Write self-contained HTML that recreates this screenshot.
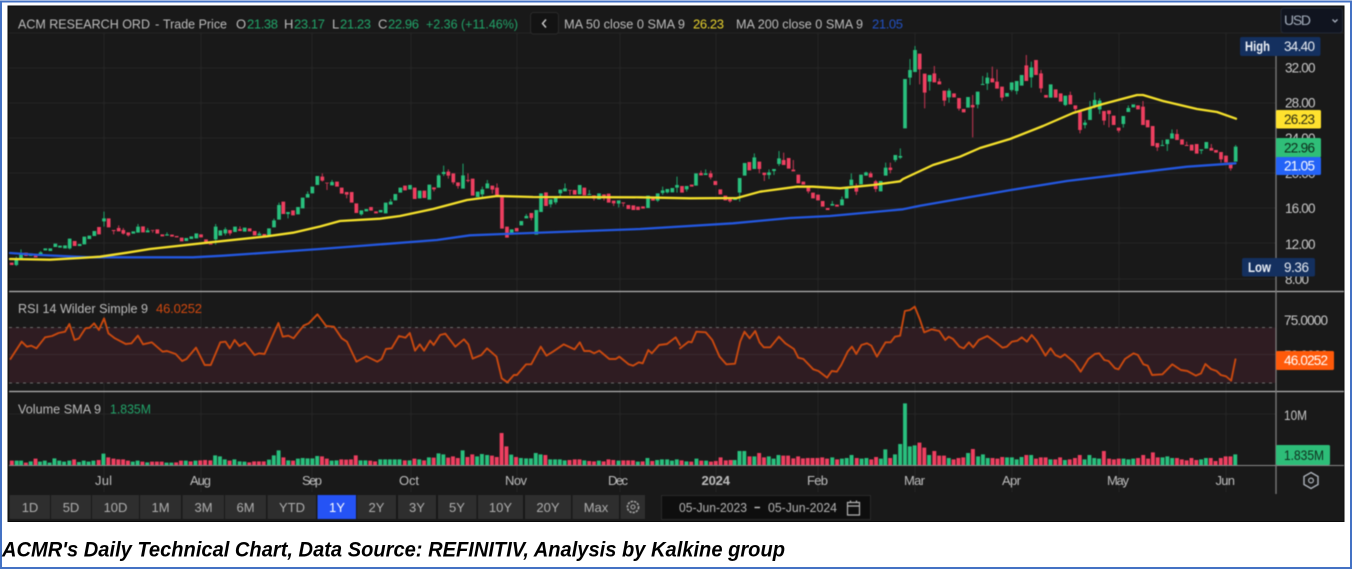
<!DOCTYPE html>
<html><head><meta charset="utf-8"><title>ACMR Daily Technical Chart</title>
<style>
html,body{margin:0;padding:0;background:#fff;width:1354px;height:570px;overflow:hidden}
svg{display:block}
text{font-family:"Liberation Sans",sans-serif;font-size:13px;fill:#bcbcbc}
.g{fill:#22a56a}.ax{fill:#c9c9c9;font-size:13.5px}.m{fill:#bdbdbd;font-size:13px}
.b{fill:#aeaeae;font-size:13px;text-anchor:middle}
.ln{fill:none;stroke-linejoin:round;stroke-linecap:round}
.bd,.wk,.vb{fill:none;vector-effect:non-scaling-stroke}
.bg{stroke:#29c07e}.br{stroke:#ee3f60}
.bd{stroke-width:3.7px}.wk{stroke-width:1.1px}.vb{stroke-width:3.9px}
.wg{stroke:#1f9a65}.wr{stroke:#b8344f}
.soft{filter:blur(.45px)}
</style></head><body>
<svg width="1354" height="570" viewBox="0 0 1354 570" xmlns="http://www.w3.org/2000/svg">
<rect width="1354" height="570" fill="#fff"/>
<rect x="1" y="1.5" width="1350" height="566.5" fill="none" stroke="#4472c4" stroke-width="2"/>
<rect x="8" y="6" width="1336" height="515.5" fill="#191919"/>
<rect x="8" y="6" width="1336" height="515.5" fill="none" stroke="#0a0a0a" stroke-width="1"/>
<g class="soft">
<!-- grid -->
<path d="M9 33H1344M9 68H1276M9 103H1276M9 138H1276M9 173H1276M9 208H1276M9 243H1276M9 279H1276M9 414H1276M104 33V492M201 33V492M312 33V492M411 33V492M517 33V492M620 33V492M716 33V492M818 33V492M915 33V492M1012 33V492M1119 33V492M1226 33V492" stroke="#262626" stroke-width="1" fill="none"/>
<!-- RSI band -->
<rect x="9" y="327.5" width="1267" height="55.5" fill="#2f1c22"/>
<path d="M9 354.5H1276" stroke="#3a2a2f"/>
<path d="M9 327.5H1276M9 383H1276" stroke="#6b6b6b" stroke-width="1" stroke-dasharray="3 4" fill="none"/>

<!-- candles 1 -->
<g transform="translate(0,150) scale(.33333)">
<path class="wk wg" d="M49 320V348M63 298V327M122 303V315M209 266V298M312 185V230M414 222V230M443 234V241M501 247V253M647 222V284M676 232V256M778 245V251M822 206V211M837 158V165M864 192V205M923 124V132"/>
<path class="wk wr" d="M341 243V253M356 226V234M370 234V254M385 256V260M458 242V248M690 250V256M720 229V237M793 259V262"/>
<path class="bd bg" d="M49 325V345M63 310V325M92 310V318M122 307V315M136 295V301M151 295V303M166 281V291M180 287V293M195 286V295M209 266V295M239 282V288M253 260V283M268 257V267M283 243V258M312 205V214M400 244V251M414 230V248M443 241V247M501 253V257M559 264V273M574 259V267M589 250V265M647 230V268M661 241V257M676 238V250M705 230V246M734 233V245M778 251V256M807 235V255M822 211V232M837 165V209M864 186V192M894 171V193M908 143V175M923 132V143M937 110V130M952 78V105"/>
<path class="bd br" d="M35 338V345M78 308V318M107 312V322M224 273V288M297 231V253M326 205V232M341 240V243M356 234V244M370 240V251M385 247V256M429 229V247M458 240V242M472 238V251M487 253V259M516 254V260M530 258V262M545 263V274M603 253V262M618 268V282M632 281V284M690 240V250M720 237V243M749 235V244M764 243V256M793 252V259M850 155V192M879 181V196"/>
</g>
<!-- candles 2 -->
<g transform="translate(320,150) scale(.33333)">
<path class="wk wg" d="M36 90V96M124 193V197M212 147V155M356 72V76M371 47V78M429 41V76M487 110V143M502 90V100M619 192V198M692 163V172M707 157V163M721 130V138M735 100V115M808 120V132M896 161V172"/>
<path class="wk wr" d="M7 70V95M21 100V120M80 134V145M342 118V124M385 58V86M400 97V103M414 108V116M444 70V97M517 119V131M531 100V113M634 204V211M750 122V135M822 146V152M852 145V152M881 160V168M910 160V170"/>
<path class="bd bg" d="M36 96V106M124 181V193M139 177V184M182 180V187M197 158V190M212 155V164M226 132V151M241 113V128M270 105V118M299 122V145M328 104V149M356 76V113M371 66V72M429 76V116M473 125V141M487 118V133M502 100V115M575 238V254M604 213V226M619 198V205M649 180V254M663 130V186M692 148V163M707 143V157M721 119V130M735 115V124M779 105V133M808 132V135M837 130V148M896 151V161"/>
<path class="bd br" d="M7 80V92M21 98V100M51 95V110M65 113V131M80 126V134M95 126V158M109 160V189M153 171V182M168 184V190M255 107V121M284 113V147M313 122V144M342 112V118M385 65V77M400 70V97M414 97V108M444 90V93M458 86V137M517 107V119M531 113V135M546 138V236M561 230V263M590 234V244M634 189V204M678 127V168M750 120V122M764 120V134M793 113V136M822 136V146M852 133V145M866 131V158M881 152V160M910 157V160M925 165V177M940 166V180M954 170V180"/>
</g>
<!-- candles 3 -->
<g transform="translate(640,140) scale(.33333)">
<path class="wk wg" d="M53 182V186M68 140V165M82 157V160M111 110V158M140 148V155M197 88V100M299 158V185M343 40V52M387 88V117M402 93V105M417 33V78M577 183V192M606 170V178M634 100V119M678 95V97M737 68V83M766 60V66M781 25V57"/>
<path class="wk wr" d="M183 92V99M212 92V118M270 184V188M358 87V100M373 105V123M431 38V60M460 60V89M505 154V160M649 130V165M692 95V100M707 120V156M751 68V100"/>
<path class="bd bg" d="M24 167V204M53 160V182M68 151V159M82 147V157M97 144V157M111 135V143M140 138V148M168 100V137M197 100V105M285 175V180M299 114V158M314 69V107M343 52V87M387 97V105M402 87V93M417 55V72M577 192V197M606 178V196M620 143V175M634 119V136M663 104V133M678 97V107M722 123V154M737 83V107M766 45V60M781 48V53"/>
<path class="bd br" d="M9 199V206M39 172V182M126 138V158M155 134V140M183 99V106M212 100V112M226 123V135M241 148V163M256 167V181M270 176V184M328 66V91M358 65V87M373 98V105M431 60V75M446 54V86M460 89V94M475 104V130M490 125V134M505 137V154M519 158V175M534 164V181M548 183V200M563 204V210M591 194V200M649 140V155M692 100V112M707 124V147M751 83V90"/>
</g>
<!-- candles 4 -->
<g transform="translate(890,40) scale(.33333)">
<path class="wk wg" d="M60 57V135M75 18V30M119 125V152M177 145V188M263 194V205M278 108V132M292 98V150M365 150V155M380 153V163M424 65V143M526 195V198M585 240V265M600 183V204M614 157V205M629 175V222M700 252V263M715 196V204M817 300V315M832 312V333M846 268V280M934 332V342M1037 315V320"/>
<path class="wk wr" d="M89 88V133M104 158V205M133 78V100M148 115V124M163 182V198M207 206V212M248 165V292M307 80V115M321 88V125M336 173V183M409 45V76M453 90V158M541 155V165M556 207V215M570 270V280M642 242V255M657 222V262M686 272V278M759 183V200M802 322V333M861 268V282M890 305V315M964 312V324M993 358V368M1022 385V392"/>
<path class="bd bg" d="M45 117V265M60 90V113M75 30V96M119 105V125M177 152V172M234 171V203M263 155V194M278 132V135M292 113V131M351 159V170M365 127V150M380 123V153M395 105V137M424 82V112M482 133V173M526 167V195M585 248V255M600 204V240M614 180V200M629 182V208M700 228V252M715 204V216M730 193V202M817 315V318M832 298V312M846 280V296M934 328V332M949 306V326M1037 320V365"/>
<path class="bd br" d="M89 41V88M104 101V158M133 100V127M148 124V133M163 152V182M192 160V172M207 174V206M221 207V217M248 195V202M307 115V127M321 125V146M336 140V173M409 76V123M438 60V105M453 100V145M468 165V173M497 148V173M512 160V185M541 165V193M556 196V207M570 215V270M642 213V242M657 211V222M671 227V255M686 263V272M744 196V208M759 200V255M773 240V262M788 258V318M802 309V322M861 282V300M876 298V314M890 315V318M905 314V332M920 312V341M964 324V332M978 330V338M993 336V358M1008 347V367M1022 367V385"/>
</g>

<!-- MA200 blue -->
<polyline class="ln" stroke="#2458e0" stroke-width="2.3" points="10,253 40,255 90,257.3 193,257.3 223,255.7 320,249 437,240 470,235.3 503,234 640,229 733,223.3 790,218 830,216 903,209.3 920,205.7 1011,190 1067,181 1136,172.7 1187,166.7 1235.5,163.3"/>
<!-- MA50 yellow -->
<polyline class="ln" stroke="#f4e02c" stroke-width="2.3" points="10,259 50,259.7 80,258 100,256.7 127,252.7 150,249 207,242.7 267,236.3 293,232.7 320,226.5 340,221 380,218.7 400,216 433,209 467,200 497,196 533,197 640,197.3 690,198.3 737,198 760,191.7 797,186.7 813,186.7 840,188.3 873,185 900,181.3 903,179 933,165 960,156.7 980,148 1010,139 1043,126 1073,113 1103,104 1137,95 1143,95 1163,101 1197,109 1217,112 1236,118.7"/>

<!-- RSI line -->
<g transform="translate(0,285) scale(.43365,.33333)">
<polyline class="ln" vector-effect="non-scaling-stroke" stroke="#c9490f" stroke-width="1.9" points="24,222 50,170 62,185 72,182 84,190 104,157 120,153 135,144 150,140 160,117 172,165 182,160 197,130 207,128 217,115 228,135 240,100 250,145 265,160 290,177 303,175 318,152 330,178 350,172 375,200 385,198 405,207 420,228 430,222 452,188 472,240 486,240 508,172 520,170 530,190 541,165 552,183 565,173 587,210 597,205 610,207 642,114 652,155 665,152 677,160 700,122 712,115 732,88 752,123 770,125 788,160 800,170 822,230 845,214 870,230 880,222 890,192 903,190 920,153 935,158 945,144 957,197 968,178 978,197 992,167 1000,180 1015,150 1027,146 1050,185 1070,163 1080,178 1090,221 1110,210 1123,190 1145,215 1157,280 1170,292 1185,270 1192,270 1213,238 1225,238 1247,185 1260,212 1275,200 1300,178 1325,193 1337,172 1347,198 1360,198 1370,205 1382,197 1405,222 1420,222 1428,215 1450,238 1460,242 1473,232 1482,235 1495,195 1503,205 1520,180 1538,177 1558,157 1568,180"/>
</g>
<g transform="translate(680,285) scale(.42992,.33333)">
<polyline class="ln" vector-effect="non-scaling-stroke" stroke="#c9490f" stroke-width="1.9" points="0,190 20,170 27,172 38,140 60,142 75,165 92,215 108,238 128,236 140,170 150,140 162,160 175,138 185,172 195,187 210,187 230,155 245,175 265,192 275,218 287,222 310,253 322,258 342,278 353,258 365,260 375,240 390,200 400,185 410,207 422,180 435,175 445,182 458,215 478,172 490,172 500,155 512,152 523,78 535,75 546,65 557,100 568,142 585,133 603,138 617,165 625,155 635,162 650,185 660,190 672,172 682,187 695,165 715,153 735,172 750,188 760,185 772,170 785,167 795,157 807,170 818,150 830,168 850,212 862,190 873,210 885,217 895,208 917,232 932,260 950,222 965,207 975,205 987,225 997,228 1012,250 1020,253 1035,222 1055,205 1065,210 1078,238 1088,242 1098,270 1122,268 1145,238 1165,255 1180,258 1200,272 1212,265 1222,237 1235,252 1248,258 1258,270 1270,274 1282,287 1292,223"/>
</g>

<!-- volume -->
<path d="M9 465.5H1344" stroke="#8a8a8a" stroke-width="1"/>
<g transform="translate(5,425) scale(.40177,.33333)">
<path class="vb bg" d="M29 120V107M40 120V107M64 120V109M87 120V110M99 120V107M111 120V113M123 120V100M135 120V107M147 120V110M160 120V107M184 120V111M196 120V107M208 120V110M220 120V107M245 120V86M318 120V110M330 120V107M354 120V112M402 120V113M414 120V113M450 120V107M474 120V107M523 120V91M535 120V94M547 120V103M571 120V103M584 120V109M596 120V110M657 120V104M669 120V91M681 120V76M705 120V106M729 120V101M741 120V99M753 120V100M765 120V100M777 120V93M813 120V107M825 120V106M885 120V106M897 120V106M934 120V103M946 120V103M958 120V103M970 120V103M982 120V103M1007 120V106M1031 120V103M1055 120V97M1079 120V85M1091 120V88M1139 120V76M1175 120V94M1187 120V87M1200 120V90M1260 120V89M1284 120V99M1297 120V100M1309 120V100M1321 120V84M1333 120V88M1357 120V103M1369 120V103M1381 120V103M1393 120V106M1442 120V106M1478 120V107M1527 120V107"/>
<path class="vb br" d="M17 120V107M52 120V113M76 120V101M172 120V103M233 120V105M257 120V97M270 120V101M282 120V103M294 120V103M306 120V107M342 120V110M366 120V110M378 120V110M390 120V110M426 120V112M438 120V107M462 120V109M486 120V106M498 120V105M511 120V106M559 120V107M608 120V112M620 120V109M632 120V109M644 120V109M693 120V97M717 120V107M789 120V94M801 120V101M837 120V103M849 120V104M861 120V103M873 120V91M909 120V107M921 120V109M995 120V106M1019 120V101M1043 120V106M1067 120V98M1103 120V98M1115 120V94M1127 120V99M1151 120V96M1163 120V88M1212 120V92M1224 120V96M1236 120V24M1248 120V64M1272 120V96M1345 120V90M1405 120V105M1418 120V103M1430 120V103M1454 120V108M1466 120V109M1490 120V109M1502 120V103M1514 120V105M1539 120V106M1551 120V106M1563 120V106"/>
</g>
<g transform="translate(635,400) scale(.40177,.33333)">
<path class="vb bg" d="M7 195V185M31 195V174M55 195V180M67 195V178M80 195V178M92 195V182M104 195V178M128 195V184M153 195V176M177 195V182M248 195V180M260 195V153M272 195V153M297 195V169M333 195V169M345 195V176M357 195V165M491 195V172M515 195V176M527 195V174M539 195V165M564 195V176M576 195V174M612 195V176M623 195V148M647 195V163M660 195V132M672 195V10M684 195V139M696 195V136M732 195V165M781 195V174M829 195V159M854 195V169M866 195V163M878 195V174M926 195V172M938 195V172M950 195V178M962 195V171M986 195V165M1034 195V178M1070 195V180M1119 195V178M1131 195V165M1143 195V174M1155 195V176M1216 195V176M1228 195V178M1240 195V176M1313 195V172M1325 195V169M1337 195V174M1409 195V178M1421 195V174M1494 195V163"/>
<path class="vb br" d="M19 195V184M43 195V183M116 195V181M140 195V185M165 195V182M189 195V185M201 195V183M213 195V172M226 195V181M238 195V180M285 195V169M309 195V159M321 195V172M369 195V167M381 195V167M394 195V175M406 195V169M418 195V175M430 195V174M442 195V174M454 195V174M466 195V172M478 195V176M503 195V178M552 195V174M588 195V178M600 195V171M635 195V174M708 195V128M720 195V143M745 195V153M757 195V167M769 195V167M793 195V178M805 195V174M817 195V172M841 195V147M890 195V174M902 195V176M914 195V171M974 195V165M998 195V176M1010 195V172M1022 195V172M1046 195V178M1058 195V172M1082 195V178M1095 195V174M1107 195V165M1167 195V153M1180 195V176M1192 195V178M1204 195V176M1252 195V174M1265 195V165M1277 195V176M1289 195V157M1301 195V172M1349 195V174M1361 195V178M1373 195V181M1385 195V174M1397 195V180M1433 195V174M1445 195V183M1458 195V174M1470 195V169M1482 195V169"/>
</g>

<!-- separators, axis -->
<path d="M9 291.5H1344M9 391.5H1344" stroke="#b4b4b4" stroke-width="1.2"/>
<path d="M1276 56V494" stroke="#7d7d7d" stroke-width="1.3"/>

<!-- header -->
<text x="18" y="28.5" textLength="132" lengthAdjust="spacingAndGlyphs">ACM RESEARCH ORD</text>
<text x="155" y="28.5">-</text>
<text x="163" y="28.5" textLength="64" lengthAdjust="spacingAndGlyphs">Trade Price</text>
<text x="236" y="28.5">O</text><text class="g" x="247" y="28.5" textLength="31">21.38</text>
<text x="284" y="28.5">H</text><text class="g" x="294" y="28.5" textLength="31">23.17</text>
<text x="332" y="28.5">L</text><text class="g" x="340" y="28.5" textLength="31">21.23</text>
<text x="378" y="28.5">C</text><text class="g" x="388" y="28.5" textLength="31">22.96</text>
<text class="g" x="426" y="28.5" textLength="92" lengthAdjust="spacingAndGlyphs">+2.36 (+11.46%)</text>
<rect x="530.5" y="12.5" width="28" height="21.5" rx="3" fill="#131313" stroke="#2b2b2b"/>
<path d="M546 19.5L542.5 23.5L546 27.5" fill="none" stroke="#cfcfcf" stroke-width="1.4"/>
<text x="564" y="28.5" textLength="121" lengthAdjust="spacingAndGlyphs">MA 50 close 0 SMA 9</text>
<text x="693" y="28.5" textLength="31" style="fill:#e9d32e">26.23</text>
<text x="736" y="28.5" textLength="127" lengthAdjust="spacingAndGlyphs">MA 200 close 0 SMA 9</text>
<text x="872" y="28.5" textLength="31" style="fill:#2352c4">21.05</text>
<!-- USD -->
<rect x="1281" y="8" width="61.5" height="25" rx="3" fill="#10141f" stroke="#232936"/>
<text x="1284" y="25" textLength="27" style="fill:#a3adbb;font-size:14px">USD</text>
<path d="M1332.5 19.5L1335 22L1337.5 19.5" fill="none" stroke="#aab2c0" stroke-width="1.3"/>

<!-- axis labels -->
<text class="ax" x="1285" y="72.5" textLength="30.5">32.00</text>
<text class="ax" x="1285" y="107.5" textLength="30.5">28.00</text>
<text class="ax" x="1285" y="143" textLength="30.5">24.00</text>
<text class="ax" x="1285" y="178" textLength="30.5">20.00</text>
<text class="ax" x="1285" y="213" textLength="30.5">16.00</text>
<text class="ax" x="1285" y="249" textLength="30.5">12.00</text>
<text class="ax" x="1285" y="284" textLength="24">8.00</text>
<text class="ax" x="1284" y="325" textLength="44">75.0000</text>
<text class="ax" x="1284" y="360" textLength="44">50.0000</text>
<text class="ax" x="1284" y="420" textLength="23" lengthAdjust="spacingAndGlyphs">10M</text>

<!-- price tags -->
<rect x="1240" y="37" width="80.5" height="19" rx="2" fill="#14305f"/>
<text x="1245" y="51" textLength="25" lengthAdjust="spacingAndGlyphs" style="fill:#eef2f8;font-size:13.5px;font-weight:bold">High</text>
<text x="1284" y="51" textLength="31" style="fill:#e8ecf2;font-size:13.5px">34.40</text>
<rect x="1242" y="258" width="73" height="18.5" rx="2" fill="#14305f"/>
<text x="1248" y="272" textLength="23" lengthAdjust="spacingAndGlyphs" style="fill:#eef2f8;font-size:13.5px;font-weight:bold">Low</text>
<text x="1284" y="272" textLength="25" style="fill:#e8ecf2;font-size:13.5px">9.36</text>
<rect x="1276" y="110" width="45" height="18.5" rx="1.5" fill="#ffe22e"/>
<text x="1284" y="124" textLength="31" style="fill:#2a2a10;font-size:13.5px">26.23</text>
<rect x="1276" y="138" width="45" height="19.5" rx="1.5" fill="#2fbe78"/>
<text x="1284" y="152.5" textLength="31" style="fill:#0d2a1a;font-size:13.5px">22.96</text>
<rect x="1276" y="157" width="45" height="18" rx="1.5" fill="#2463f7"/>
<text x="1284" y="170.5" textLength="31" style="fill:#fff;font-size:13.5px">21.05</text>
<rect x="1276" y="351" width="58" height="19" rx="1.5" fill="#ff5a0a"/>
<text x="1284" y="365" textLength="44" style="fill:#fff;font-size:13.5px">46.0252</text>
<rect x="1276" y="445" width="54" height="20" rx="1.5" fill="#2dbd78"/>
<text x="1284" y="460" textLength="40" lengthAdjust="spacingAndGlyphs" style="fill:#0f2e1e;font-size:13.5px">1.835M</text>

<!-- pane titles -->
<text x="18" y="313" textLength="130" lengthAdjust="spacingAndGlyphs">RSI 14 Wilder Simple 9</text>
<text x="156" y="313" textLength="46" style="fill:#d2490f">46.0252</text>
<text x="18" y="413.5" textLength="83" lengthAdjust="spacingAndGlyphs">Volume SMA 9</text>
<text class="g" x="110" y="413.5" textLength="41" lengthAdjust="spacingAndGlyphs">1.835M</text>

<!-- months -->
<text class="m" x="95" y="485" textLength="17">Jul</text>
<text class="m" x="190" y="485" textLength="21">Aug</text>
<text class="m" x="302" y="485" textLength="20">Sep</text>
<text class="m" x="399" y="485" textLength="20">Oct</text>
<text class="m" x="505" y="485" textLength="22">Nov</text>
<text class="m" x="608" y="485" textLength="20">Dec</text>
<text class="m" x="701.5" y="485" textLength="28.5" style="font-weight:bold">2024</text>
<text class="m" x="807" y="485" textLength="21">Feb</text>
<text class="m" x="904" y="485" textLength="21">Mar</text>
<text class="m" x="1002" y="485" textLength="19">Apr</text>
<text class="m" x="1107" y="485" textLength="22">May</text>
<text class="m" x="1215.5" y="485" textLength="19.5">Jun</text>
<path d="M1311 472.5L1318 476.5V484.5L1311 488.5L1304 484.5V476.5Z" fill="none" stroke="#aeb4bc" stroke-width="1.4"/>
<circle cx="1311" cy="480.5" r="2.4" fill="none" stroke="#aeb4bc" stroke-width="1.2"/>

<!-- toolbar -->
<g fill="#2e2e2e">
<rect x="9.5" y="495" width="40.5" height="24"/><rect x="51" y="495" width="40" height="24"/><rect x="92" y="495" width="47" height="24"/><rect x="140" y="495" width="41" height="24"/><rect x="182.5" y="495" width="41.5" height="24"/><rect x="225" y="495" width="41" height="24"/><rect x="267.5" y="495" width="48.5" height="24"/><rect x="357" y="495" width="39" height="24"/><rect x="398" y="495" width="38" height="24"/><rect x="438" y="495" width="38.5" height="24"/><rect x="478" y="495" width="45" height="24"/><rect x="525" y="495" width="46" height="24"/><rect x="572.5" y="495" width="46.5" height="24"/><rect x="620.5" y="495" width="24.5" height="24"/>
</g>
<rect x="317.5" y="495" width="38.5" height="24" fill="#2553f5"/>
<text class="b" x="30" y="512">1D</text><text class="b" x="71" y="512">5D</text><text class="b" x="115.5" y="512">10D</text><text class="b" x="160.5" y="512">1M</text><text class="b" x="203.5" y="512">3M</text><text class="b" x="245.5" y="512">6M</text><text class="b" x="292" y="512">YTD</text>
<text class="b" x="337" y="512" style="fill:#fff">1Y</text>
<text class="b" x="376.5" y="512">2Y</text><text class="b" x="417" y="512">3Y</text><text class="b" x="457" y="512">5Y</text><text class="b" x="500.5" y="512">10Y</text><text class="b" x="548" y="512">20Y</text><text class="b" x="596" y="512">Max</text>
<circle cx="633" cy="507" r="5.6" fill="none" stroke="#a4a4a4" stroke-width="1.6" stroke-dasharray="2.4 1"/>
<circle cx="633" cy="507" r="2" fill="none" stroke="#a4a4a4" stroke-width="1.1"/>
<rect x="661.5" y="495.5" width="209" height="24" fill="#0e0e0e" stroke="#2a2a2a"/>
<text x="679" y="512" textLength="68" lengthAdjust="spacingAndGlyphs" style="fill:#b4b4b4">05-Jun-2023</text>
<path d="M754.5 507.5H760" stroke="#c4c4c4" stroke-width="1.4"/>
<text x="768" y="512" textLength="69" lengthAdjust="spacingAndGlyphs" style="fill:#b4b4b4">05-Jun-2024</text>
<path d="M847.5 502.5H859.5V515H847.5ZM847.5 506H859.5M850.5 500.5V503M856.5 500.5V503" fill="none" stroke="#b4b4b4" stroke-width="1.2"/>
</g>

<!-- caption -->
<text x="2" y="556.5" textLength="783" lengthAdjust="spacingAndGlyphs" style="fill:#000;font-size:21px;font-weight:bold;font-style:italic">ACMR's Daily Technical Chart, Data Source: REFINITIV, Analysis by Kalkine group</text>
</svg>
</body></html>
